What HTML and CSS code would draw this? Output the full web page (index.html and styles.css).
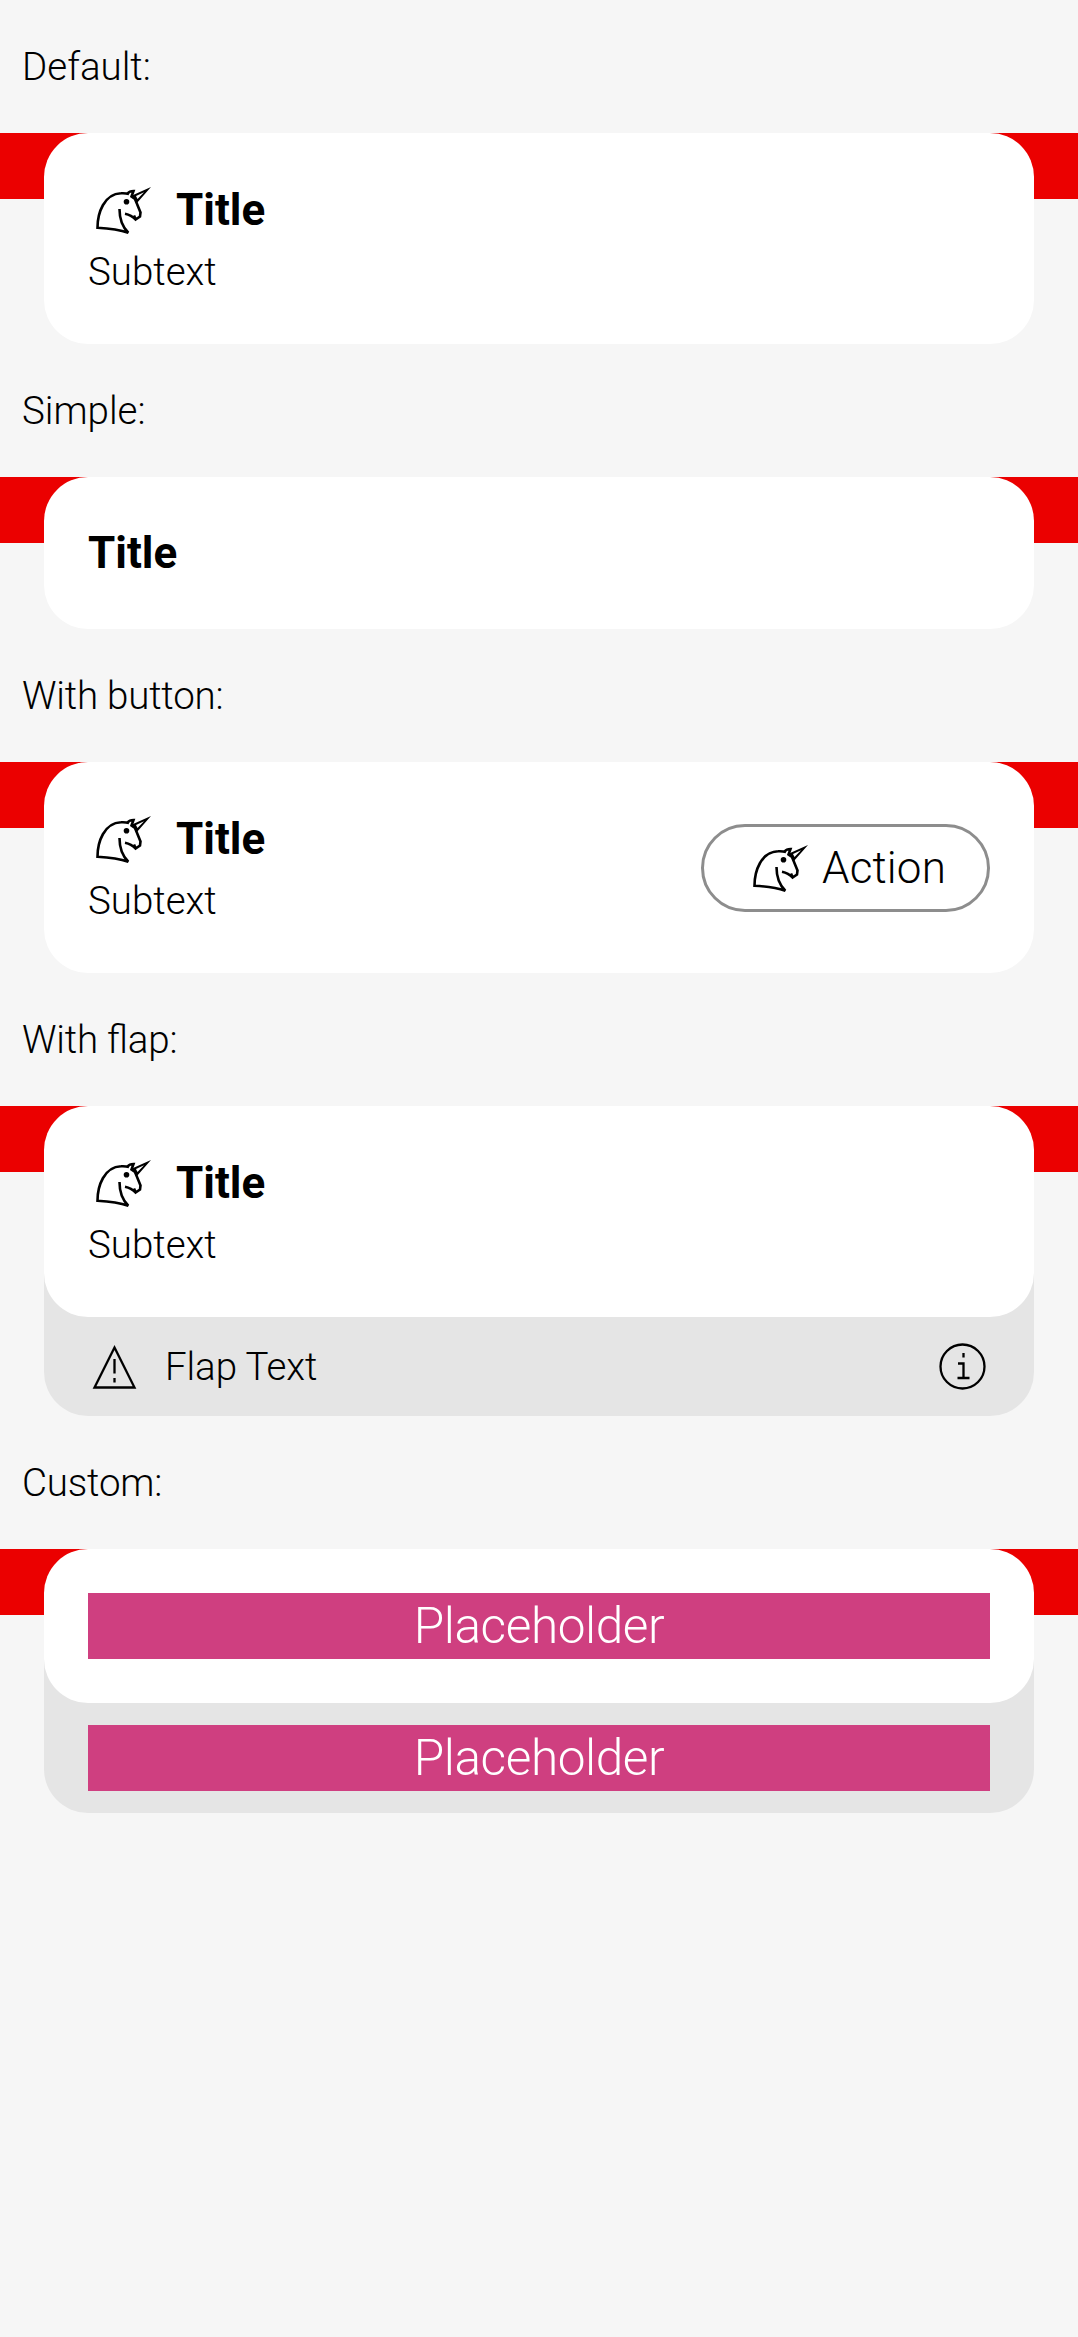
FILE: index.html
```
<!DOCTYPE html>
<html lang="en">
<head>
<meta charset="utf-8">
<title>Header cards</title>
<link rel="stylesheet" href="styles.css">
</head>
<body>
<svg class="sprite" aria-hidden="true">
  <symbol id="unicorn" viewBox="0 0 66 66">
    <g fill="none" stroke="#000" stroke-width="2.6">
      <path d="M31.500 32C31.500 43 34.500 50 40.300 55.700C31 52.500 20 51.300 9.500 50.700C9.500 36 16 17 33 16.300Q37 16 41 17"/>
      <path d="M39.500 16.500Q41.500 14 45.500 14L43.500 19.500L47 22L52.500 35.500L52 39.500L47.500 42.500Q43.500 38 37 36.700M46 38.500L47.500 42"/>
    </g>
    <path d="M63 10L44 18.500L46.500 22.500L48.500 26.500ZM56 15.300L48 19L49.500 22Z" fill-rule="evenodd"/>
    <circle cx="38.500" cy="24.700" r="2.800"/>
  </symbol>
</svg>
<main>
  <h2 class="label">Default:</h2>
  <section class="header">
    <div class="card">
      <div class="info">
        <div class="title"><svg class="icon"><use href="#unicorn"/></svg><b>Title</b></div>
        <p class="subtext">Subtext</p>
      </div>
    </div>
  </section>
  <h2 class="label">Simple:</h2>
  <section class="header">
    <div class="card">
      <div class="title simple"><b>Title</b></div>
    </div>
  </section>
  <h2 class="label tight">With button:</h2>
  <section class="header">
    <div class="card">
      <div class="info">
        <div class="title"><svg class="icon"><use href="#unicorn"/></svg><b>Title</b></div>
        <p class="subtext">Subtext</p>
      </div>
      <button class="action"><svg class="icon"><use href="#unicorn"/></svg><span>Action</span></button>
    </div>
  </section>
  <h2 class="label tight">With flap:</h2>
  <section class="header">
    <div class="shell">
      <div class="card">
        <div class="info">
          <div class="title"><svg class="icon"><use href="#unicorn"/></svg><b>Title</b></div>
          <p class="subtext">Subtext</p>
        </div>
      </div>
      <div class="flap">
        <svg class="flap-icon" viewBox="0 0 55 55" fill="none" stroke="#000" stroke-width="2.300">
          <path d="M26.500 8.500L46.500 48.500H6.500Z"/>
          <path d="M26.500 20V34.500M26.500 39V43.500"/>
        </svg>
        <span class="flap-text">Flap Text</span>
        <svg class="flap-icon" viewBox="0 0 55 55" fill="none" stroke="#000" stroke-width="2.300">
          <circle cx="27.500" cy="27.500" r="22"/>
          <path d="M28.500 14V18.500M23 24.500H28.500V39M22.500 39H34.500"/>
        </svg>
      </div>
    </div>
  </section>
  <h2 class="label tight">Custom:</h2>
  <section class="header">
    <div class="shell">
      <div class="card custom"><div class="placeholder">Placeholder</div></div>
      <div class="flap custom-flap"><div class="placeholder">Placeholder</div></div>
    </div>
  </section>
</main>
</body>
</html>
```
FILE: styles.css
```
* { box-sizing: border-box; }
body {
  margin: 0;
  min-height: 2337px;
  background: #f6f6f6;
  color: #000;
  font-family: Roboto, sans-serif;
  font-weight: 300;
}
.sprite { display: block; width: 0; height: 0; }
.label {
  margin: 0;
  height: 133px;
  padding-left: 22px;
  font-size: 38.5px;
  font-weight: 300;
  line-height: 133px;
}
.tight { letter-spacing: -0.2px; font-feature-settings: "liga" 1; }
.header {
  padding: 0 44px;
  background: linear-gradient(#eb0000, #eb0000) top / 100% 66px no-repeat;
}
.card {
  display: flex;
  align-items: center;
  justify-content: space-between;
  padding: 44px;
  border-radius: 44px;
  background: #fff;
}
.title {
  display: flex;
  align-items: center;
  gap: 22px;
  height: 66px;
  font-size: 44px;
}
.title b { font-weight: 700; }
.simple { height: 64px; }
.subtext { margin: 0; font-size: 38.5px; line-height: 57px; }
.icon { display: block; flex: none; width: 66px; height: 66px; }
.action {
  display: flex;
  align-items: center;
  gap: 11px;
  width: 289px;
  height: 88px;
  padding: 0 0 0 41px;
  border: 3px solid #8d8d8d;
  border-radius: 44px;
  background: #fff;
  color: #000;
  font: 300 44px Roboto, sans-serif;
  letter-spacing: 0.15px;
}
.shell { border-radius: 44px; background: linear-gradient(#e5e5e5, #e5e5e5) bottom / 100% calc(100% - 88px) no-repeat; }
.flap {
  display: flex;
  align-items: center;
  height: 99px;
  padding: 0 44px;
  font-size: 38.5px;
}
.flap-icon { display: block; flex: none; width: 55px; height: 55px; }
.flap-text { flex: 1; padding-left: 22px; letter-spacing: -0.1px; }
.placeholder {
  width: 100%;
  height: 66px;
  background: #cf3f80;
  color: #fff;
  font-size: 49.5px;
  line-height: 66px;
  letter-spacing: -0.4px;
  text-align: center;
}
.custom-flap { height: 110px; }
```
